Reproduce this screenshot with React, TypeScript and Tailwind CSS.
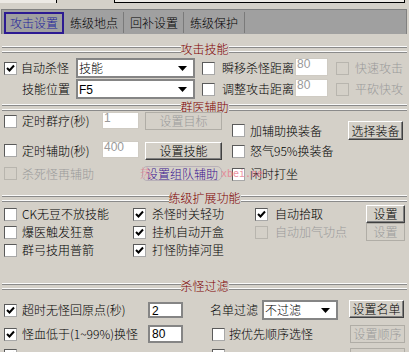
import React from "react";

type P = { className?: string; children?: React.ReactNode };

function Cb({ checked = false, disabled = false, className = "" }: { checked?: boolean; disabled?: boolean; className?: string }) {
  return (
    <div
      className={
        "w-[13px] h-[13px] shrink-0 border " +
        (disabled
          ? "border-[#b8b5ae] bg-[#d4d0c8] "
          : "bg-white border-t-[#5a5a5a] border-l-[#5a5a5a] border-b-[#a8a8a8] border-r-[#a8a8a8] ") +
        className
      }
    >
      {checked && (
        <svg width="11" height="11" viewBox="0 0 11 11" className="block">
          <polyline points="2,5 4.5,7.5 9,2.5" fill="none" stroke="#000" strokeWidth="2" />
        </svg>
      )}
    </div>
  );
}

function Btn({ disabled = false, className = "", children }: P & { disabled?: boolean }) {
  return (
    <div
      className={
        "shrink-0 flex items-center justify-center border leading-[12px] " +
        (disabled
          ? "border-[#b0ada6] text-[#9a9a9a] "
          : "border-t-white border-l-white border-b-[#404040] border-r-[#404040] shadow-[inset_-1px_-1px_0_#808080] ") +
        className
      }
    >
      {children}
    </div>
  );
}

function Combo({ className = "", children }: P) {
  return (
    <div className={"shrink-0 flex items-center bg-white border-2 border-[#858585] pl-[1px] " + className}>
      <span className="flex-1 leading-[14px]">{children}</span>
      <svg width="9" height="5" viewBox="0 0 9 5" className="mr-[6px]">
        <polygon points="0,0 9,0 4.5,5" fill="#000" />
      </svg>
    </div>
  );
}

function Edit({ className = "", children }: P) {
  return (
    <div
      className={
        "shrink-0 bg-white border border-[#cfcbc3] text-[#9a9a9a] font-['Liberation_Sans',sans-serif] text-[12px] leading-[11px] pl-[1px] " +
        className
      }
    >
      {children}
    </div>
  );
}

function Edit2({ className = "", children }: P) {
  return (
    <div
      className={
        "shrink-0 bg-white border-2 border-[#858585] text-black font-['Liberation_Sans',sans-serif] text-[12px] leading-[12px] pl-[2px] pt-[1px] " +
        className
      }
    >
      {children}
    </div>
  );
}

function Line() {
  return (
    <div className="flex-1 h-[7px] flex flex-col justify-between">
      <div className="h-[2px] border-t border-t-[#fafafa] border-b border-b-[#8a8a8a]" />
      <div className="h-[2px] border-t border-t-[#fafafa] border-b border-b-[#8a8a8a]" />
    </div>
  );
}

function Hdr({ t, className = "" }: { t: string; className?: string }) {
  return (
    <div className={"flex items-center mx-[2px] h-[12px] " + className}>
      <Line />
      <span className="text-[#800000] leading-[12px]">{t}</span>
      <Line />
    </div>
  );
}

export default function App() {
  return (
    <div className="w-[409px] h-[352px] overflow-hidden bg-[#d4d0c8] text-[12px] leading-[14px] font-light text-black font-['Noto_Sans_CJK_SC',sans-serif] relative">
      {/* top strip */}
      <div className="flex h-[3px]">
        <div className="w-[57px] bg-[#ece9e4] border-r border-black" />
        <div className="w-[58px] border-r border-black" />
        <div className="w-[290px] bg-[#ece9e4] border-b border-r border-black" />
      </div>

      {/* tab bar */}
      <div className="mt-[6px] ml-[1px] w-[406px] h-[25px] bg-[#a0a0a0] border-t border-l border-r border-[#808080] flex pt-[2px] pl-[2px]">
        <div className="w-[60px] border-2 border-[#2c1a92] flex items-center justify-center text-[#1e1e9c]">攻击设置</div>
        <div className="w-[60px] border-r border-[#7a7a7a] pl-[6px] flex items-center mb-[1px]">练级地点</div>
        <div className="w-[60px] border-r border-[#7a7a7a] pl-[6px] flex items-center mb-[1px]">回补设置</div>
        <div className="w-[61px] border-r border-[#7a7a7a] pl-[6px] flex items-center mb-[1px]">练级保护</div>
      </div>

      {/* 攻击技能 */}
      <Hdr t="攻击技能" className="mt-[9px]" />
      <div className="mt-[3px] flex flex-col gap-[1px]">
        <div className="flex items-center h-[20px] pl-[4px]">
          <Cb checked />
          <span className="ml-[4px] w-[55px]">自动杀怪</span>
          <Combo className="w-[119px] h-[20px]">技能</Combo>
          <Cb className="ml-[7px]" />
          <span className="ml-[7px] w-[73px]">瞬移杀怪距离</span>
          <Edit className="w-[33px] h-[18px] self-start">80</Edit>
          <Cb disabled className="ml-[8px]" />
          <span className="ml-[6px] text-[#9a9a9a]">快速攻击</span>
        </div>
        <div className="flex items-center h-[20px] pl-[22px]">
          <span className="w-[54px]">技能位置</span>
          <Combo className="w-[119px] h-[20px]">
            <span className="font-['Liberation_Sans',sans-serif]">F5</span>
          </Combo>
          <Cb className="ml-[7px]" />
          <span className="ml-[7px] w-[73px]">调整攻击距离</span>
          <Edit className="w-[33px] h-[18px] self-start">80</Edit>
          <Cb disabled className="ml-[8px]" />
          <span className="ml-[6px] text-[#9a9a9a]">平砍快攻</span>
        </div>
      </div>

      {/* 群医辅助 */}
      <Hdr t="群医辅助" className="mt-[2px]" />
      <div className="flex h-[70px] -mt-[1px]">
        <div className="w-[232px] flex flex-col">
          <div className="flex items-center h-[18px] pl-[4px]">
            <Cb />
            <span className="ml-[5px] w-[80px]">定时群疗(秒)</span>
            <Edit className="w-[37px] h-[17px] self-start">1</Edit>
            <Btn disabled className="ml-[6px] w-[77px] h-[18px]">设置目标</Btn>
          </div>
          <div className="mt-[11px] flex items-center h-[19px] pl-[4px]">
            <Cb />
            <span className="ml-[5px] w-[80px]">定时辅助(秒)</span>
            <Edit className="w-[37px] h-[17px] self-start">400</Edit>
            <Btn className="ml-[6px] w-[77px] h-[18px] self-end">设置技能</Btn>
          </div>
          <div className="mt-[6px] flex items-center h-[15px] pl-[4px]">
            <Cb disabled />
            <span className="ml-[5px] w-[80px] text-[#9a9a9a]">杀死怪再辅助</span>
            <div className="ml-[40px] w-[80px] h-[15px] rounded-[5px] border border-[#b8b0b8] flex items-center justify-center text-[#3a1290]">
              设置组队辅助
            </div>
          </div>
        </div>
        <div className="flex flex-col">
          <div className="mt-[9px] flex items-center h-[19px]">
            <Cb />
            <span className="ml-[5px] w-[98px]">加辅助换装备</span>
            <Btn className="w-[55px] h-[19px]">选择装备</Btn>
          </div>
          <div className="mt-[2px] flex items-center h-[18px]">
            <Cb />
            <span className="ml-[5px]">怒气95%换装备</span>
          </div>
          <div className="mt-[6px] flex items-center h-[16px]">
            <Cb />
            <span className="ml-[5px]">闲时打坐</span>
          </div>
        </div>
      </div>
      {/* watermark overlay */}
      <span className="absolute left-[140px] top-[166px] text-[#e8788c] opacity-70 leading-[14px]">热</span>
      <span className="absolute left-[221px] top-[168px] text-[#e8788c] opacity-80 text-[10px] leading-[12px] font-['DejaVu_Sans_Mono',monospace]">xbei.ne</span>

      {/* 练级扩展功能 */}
      <Hdr t="练级扩展功能" className="mt-[10px]" />
      <div className="mt-[1px] flex flex-col">
        <div className="flex items-center h-[18px] pl-[4px]">
          <div className="w-[129px] flex items-center"><Cb /><span className="ml-[5px]">CK无豆不放技能</span></div>
          <div className="w-[122px] flex items-center"><Cb checked /><span className="ml-[6px]">杀怪时关轻功</span></div>
          <div className="w-[111px] flex items-center"><Cb checked /><span className="ml-[7px]">自动拾取</span></div>
          <Btn className="w-[39px] h-[18px]">设置</Btn>
        </div>
        <div className="flex items-center h-[18px] pl-[4px]">
          <div className="w-[129px] flex items-center"><Cb /><span className="ml-[5px]">爆医触发狂意</span></div>
          <div className="w-[122px] flex items-center"><Cb checked /><span className="ml-[6px]">挂机自动开盒</span></div>
          <div className="w-[111px] flex items-center"><Cb disabled /><span className="ml-[7px] text-[#9a9a9a]">自动加气功点</span></div>
          <Btn disabled className="w-[39px] h-[18px]">设置</Btn>
        </div>
        <div className="flex items-center h-[18px] pl-[4px]">
          <div className="w-[129px] flex items-center"><Cb /><span className="ml-[5px]">群弓技用普箭</span></div>
          <div className="w-[122px] flex items-center"><Cb checked /><span className="ml-[6px]">打怪防掉河里</span></div>
        </div>
      </div>

      {/* 杀怪过滤 */}
      <Hdr t="杀怪过滤" className="mt-[21px]" />
      <div className="mt-[8px] flex flex-col">
        <div className="flex items-center h-[20px] pl-[4px]">
          <div className="w-[144px] flex items-center"><Cb checked /><span className="ml-[5px]">超时无怪回原点(秒)</span></div>
          <Edit2 className="w-[35px] h-[16px]">2</Edit2>
          <span className="ml-[27px] w-[52px]">名单过滤</span>
          <Combo className="w-[76px] h-[20px]">不过滤</Combo>
          <Btn className="ml-[11px] w-[55px] h-[18px] self-start">设置名单</Btn>
        </div>
        <div className="mt-[5px] flex items-center h-[18px] pl-[4px]">
          <div className="w-[144px] flex items-center"><Cb checked /><span className="ml-[5px]">怪血低于(1~99%)换怪</span></div>
          <Edit2 className="w-[35px] h-[18px]">80</Edit2>
          <Cb className="ml-[29px]" />
          <span className="ml-[4px] w-[121px]">按优先顺序选怪</span>
          <Btn disabled className="w-[55px] h-[18px]">设置顺序</Btn>
        </div>
        <div className="mt-[5px] flex items-start h-[18px] pl-[4px]">
          <div className="w-[144px] pt-[1px]"><Cb checked /></div>
          <div className="w-[35px]" />
          <Cb className="ml-[29px] mt-[1px]" />
          <div className="ml-[4px] w-[121px]" />
          <Btn disabled className="w-[55px] h-[18px]"> </Btn>
        </div>
      </div>
    </div>
  );
}
